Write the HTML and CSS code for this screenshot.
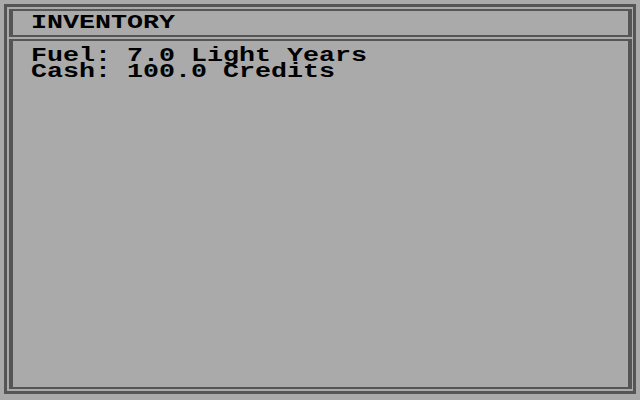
FILE: index.html
```html
<!DOCTYPE html>
<html>
<head>
<meta charset="utf-8">
<title>Inventory</title>
<link rel="stylesheet" href="styles.css">
</head>
<body>
<div class="frame">
  <div class="header"><span class="txt">INVENTORY</span></div>
  <div class="content">
    <div class="line"><span class="txt">Fuel: 7.0 Light Years</span></div>
    <div class="line"><span class="txt">Cash: 100.0 Credits</span></div>
  </div>
</div>
</body>
</html>
```
FILE: styles.css
```css
html, body {
  margin: 0;
  padding: 0;
  background: #aaaaaa;
  width: 640px;
  height: 400px;
  overflow: hidden;
}
.frame {
  box-sizing: border-box;
  margin: 4px 4px 0 4px;
  height: 390px;
  border: 3px solid #555555;
  padding: 2px 1px 2px 2px;
  display: flex;
  flex-direction: column;
  gap: 2px;
  font-family: "Liberation Mono", "DejaVu Sans Mono", monospace;
  font-weight: bold;
  font-size: 20px;
  line-height: 16px;
  color: #000000;
}
.header {
  border-style: solid;
  border-color: #555555;
  border-width: 2px 4px;
  padding: 4px 0 4px 18px;
}
.content {
  flex: 1;
  border-style: solid;
  border-color: #555555;
  border-width: 2px 4px;
  padding: 7px 0 0 18px;
}
.line {
  height: 16px;
}
.txt {
  display: inline-block;
  white-space: pre;
  transform: scaleX(1.3333);
  transform-origin: 0 0;
}
```
